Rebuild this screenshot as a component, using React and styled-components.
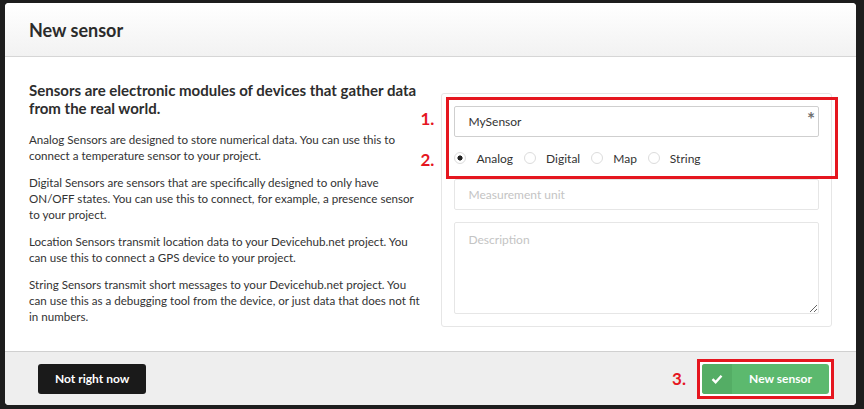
import styled, { createGlobalStyle } from 'styled-components';

const GlobalStyle = createGlobalStyle`
  html, body {
    margin: 0;
    padding: 0;
    background: #1d1d1d;
    font-family: Lato, "Open Sans", sans-serif;
  }
`;

const App = () => {
  return (
    <>
      <GlobalStyle />
      <Backdrop>
        <Modal>
          <Header>
            <Title>New sensor</Title>
          </Header>
          <Body>
            <InfoColumn>
              <Lead>Sensors are electronic modules of devices that gather data from the real world.</Lead>
              <Para>Analog Sensors are designed to store numerical data. You can use this to connect a temperature sensor to your project.</Para>
              <Para>Digital Sensors are sensors that are specifically designed to only have ON/OFF states. You can use this to connect, for example, a presence sensor to your project.</Para>
              <Para>Location Sensors transmit location data to your Devicehub.net project. You can use this to connect a GPS device to your project.</Para>
              <Para>String Sensors transmit short messages to your Devicehub.net project. You can use this as a debugging tool from the device, or just data that does not fit in numbers.</Para>
            </InfoColumn>
            <FormPanel>
              <StepLabel top='14px'>1.</StepLabel>
              <StepLabel top='55px'>2.</StepLabel>
              <Highlight />
              <Field>
                <Input defaultValue='MySensor' />
                <Required>*</Required>
              </Field>
              <RadioRow>
                <RadioItem>
                  <Radio checked />
                  <span>Analog</span>
                </RadioItem>
                <RadioItem>
                  <Radio />
                  <span>Digital</span>
                </RadioItem>
                <RadioItem>
                  <Radio />
                  <span>Map</span>
                </RadioItem>
                <RadioItem>
                  <Radio />
                  <span>String</span>
                </RadioItem>
              </RadioRow>
              <Input placeholder='Measurement unit' />
              <TextArea placeholder='Description' />
            </FormPanel>
          </Body>
          <Footer>
            <DarkButton>Not right now</DarkButton>
            <FooterRight>
              <FooterStep>3.</FooterStep>
              <ButtonFrame>
                <GreenButton>
                  <IconPart>
                    <svg width='12' height='10' viewBox='0 0 12 10'>
                      <path d='M1.5 5.2 L4.6 8.2 L10.5 1.8' fill='none' stroke='#fff' strokeWidth='2.4' />
                    </svg>
                  </IconPart>
                  <ButtonText>New sensor</ButtonText>
                </GreenButton>
              </ButtonFrame>
            </FooterRight>
          </Footer>
        </Modal>
      </Backdrop>
    </>
  );
};

const Backdrop = styled.div`
  width: 864px;
  height: 409px;
  padding: 3px 8px 4px 5px;
  box-sizing: border-box;
  background: #1d1d1d;
`;

const Modal = styled.div`
  height: 100%;
  background: #fff;
  border-radius: 4px;
  overflow: hidden;
  display: flex;
  flex-direction: column;
`;

const Header = styled.div`
  height: 54px;
  box-sizing: border-box;
  padding: 0 24px;
  display: flex;
  align-items: center;
  background: linear-gradient(#ffffff, #f2f2f2);
  border-bottom: 1px solid #d6d6d6;
`;

const Title = styled.h2`
  margin: 0;
  font-size: 18px;
  font-weight: 700;
  color: #2b2b2b;
`;

const Body = styled.div`
  flex: 1;
  display: flex;
  gap: 21px;
  padding: 24px 24px 0 24px;
`;

const InfoColumn = styled.div`
  width: 392px;
  color: #333;
`;

const Lead = styled.h3`
  margin: 0 0 15px;
  font-size: 15px;
  line-height: 18px;
  font-weight: 700;
  color: #2d2d2d;
`;

const Para = styled.p`
  margin: 0 0 11px;
  font-size: 11.6px;
  line-height: 16px;
`;

const FormPanel = styled.div`
  position: relative;
  margin-top: 12px;
  width: 391px;
  height: 234px;
  box-sizing: border-box;
  padding: 12px;
  border: 1px solid #e6e6e6;
  border-radius: 3px;
  display: flex;
  flex-direction: column;
`;

const Highlight = styled.div`
  position: absolute;
  left: 4px;
  top: 3px;
  width: 392px;
  height: 82px;
  box-sizing: border-box;
  border: 3px solid #e5161f;
  pointer-events: none;
  z-index: 2;
`;

const StepLabel = styled.div`
  position: absolute;
  left: -22px;
  top: ${(props) => props.top};
  font-size: 17px;
  font-weight: 700;
  color: #e5161f;
`;

const Field = styled.div`
  position: relative;
`;

const Input = styled.input`
  width: 100%;
  height: 31px;
  box-sizing: border-box;
  padding: 0 13px;
  border: 1px solid #cfcfcf;
  border-radius: 2px;
  font-family: Lato, sans-serif;
  font-size: 12px;
  color: #333;
  outline: none;

  &::placeholder {
    color: #c4c4c4;
  }

  &:not(:first-child) {
    border-color: #e6e6e6;
  }
`;

const Required = styled.span`
  position: absolute;
  right: 4px;
  top: 1px;
  font-size: 19px;
  font-weight: 700;
  color: #6f6f6f;
`;

const RadioRow = styled.div`
  height: 42px;
  display: flex;
  align-items: center;
  gap: 11px;
  padding-left: 0;
  font-size: 12px;
  color: #333;
`;

const RadioItem = styled.label`
  display: flex;
  align-items: center;
  gap: 10px;
`;

const Radio = styled.span`
  width: 12px;
  height: 12px;
  box-sizing: border-box;
  border-radius: 50%;
  border: 1px solid #dcdcdc;
  background: ${(props) => (props.checked ? 'radial-gradient(circle, #222 0 2.2px, #fff 2.9px)' : '#fff')};
`;

const TextArea = styled.textarea`
  margin-top: 12px;
  flex: 1;
  box-sizing: border-box;
  resize: vertical;
  padding: 9px 13px;
  border: 1px solid #e6e6e6;
  border-radius: 2px;
  font-family: Lato, sans-serif;
  font-size: 12px;
  outline: none;

  &::placeholder {
    color: #c4c4c4;
  }
`;

const Footer = styled.div`
  height: 54px;
  box-sizing: border-box;
  background: #eeeeee;
  border-top: 1px solid #d0d0d0;
  display: flex;
  align-items: center;
  justify-content: space-between;
  padding: 0 22px 0 33px;
`;

const DarkButton = styled.button`
  height: 30px;
  padding: 0 17px;
  border: none;
  border-radius: 3px;
  background: #1a1a1a;
  color: #fff;
  font-family: Lato, sans-serif;
  font-weight: 700;
  font-size: 12px;
`;

const FooterRight = styled.div`
  display: flex;
  align-items: center;
  gap: 11px;
`;

const FooterStep = styled.div`
  font-size: 17px;
  font-weight: 700;
  color: #e5161f;
`;

const ButtonFrame = styled.div`
  padding: 2px;
  border: 3px solid #e5161f;
  background: #fff;
`;

const GreenButton = styled.button`
  display: flex;
  width: 127px;
  height: 30px;
  padding: 0;
  border: none;
  border-radius: 3px;
  overflow: hidden;
  background: #5cb96e;
  color: #fff;
  font-family: Lato, sans-serif;
  font-weight: 700;
  font-size: 12px;
`;

const IconPart = styled.span`
  width: 30px;
  height: 100%;
  display: flex;
  align-items: center;
  justify-content: center;
  background: #54ad65;
`;

const ButtonText = styled.span`
  flex: 1;
  height: 100%;
  display: flex;
  align-items: center;
  justify-content: center;
`;

export default App;
